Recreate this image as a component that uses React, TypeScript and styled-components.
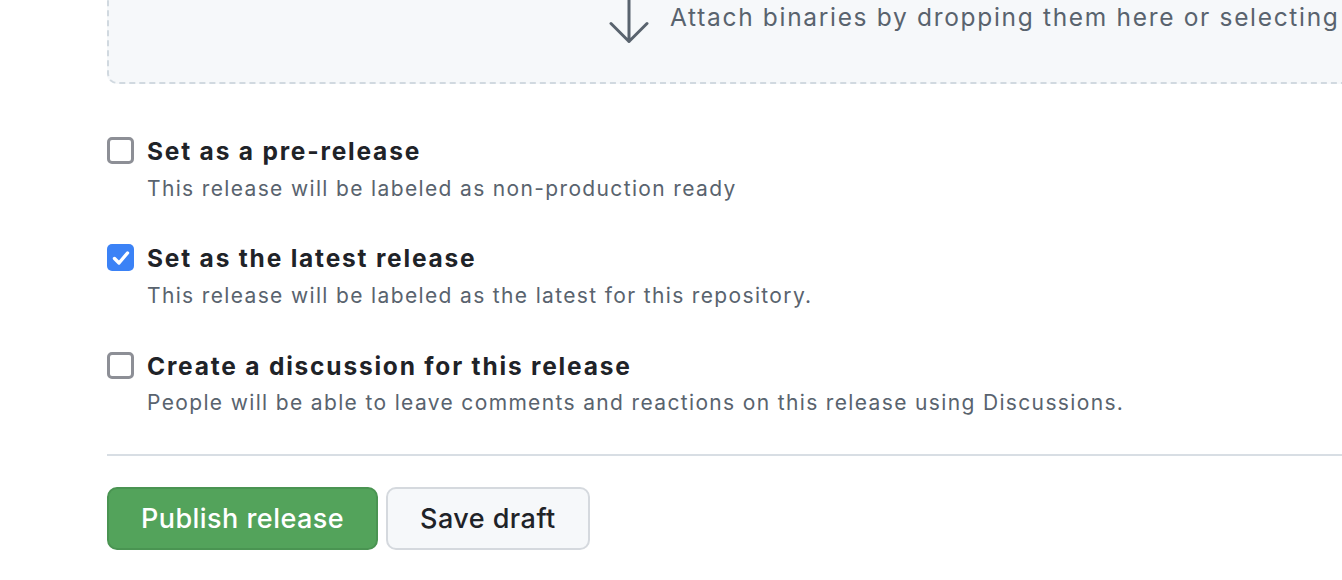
import React from "react";
import styled, { createGlobalStyle } from "styled-components";

const Global = createGlobalStyle`
  html, body { margin: 0; padding: 0; background: #ffffff; overflow: hidden; }
  body { font-family: Inter, "Noto Sans", "Liberation Sans", sans-serif; color: #1f2328; }
  * { box-sizing: border-box; }
`;

const Page = styled.div`
  padding-left: 107px;
  width: 1342px;
  height: 580px;
  overflow: hidden;
`;

const Column = styled.div`
  width: 1400px;
  display: flex;
  flex-direction: column;
`;

const Dropzone = styled.div`
  margin-top: -50px;
  height: 134px;
  border: 2px dashed #d1d9e0;
  border-radius: 10px;
  background: #f6f8fa;
  display: flex;
  align-items: center;
  gap: 21px;
  padding-left: 500px;
`;

const DropText = styled.span`
  font-size: 24.5px;
  line-height: 1.5;
  letter-spacing: 1.68px;
  color: #59636e;
  white-space: nowrap;
`;

const Options = styled.div`
  margin-top: 49px;
  display: flex;
  flex-direction: column;
  gap: 36px;
`;

const Row = styled.label`
  display: flex;
  align-items: flex-start;
  gap: 13px;
`;

const Box = styled.span<{ $checked?: boolean }>`
  flex: none;
  margin-top: 4px;
  width: 27px;
  height: 27px;
  border-radius: 5px;
  display: flex;
  align-items: center;
  justify-content: center;
  background: ${(p) => (p.$checked ? "#3b82f6" : "#ffffff")};
  border: ${(p) => (p.$checked ? "none" : "3px solid #8d8f96")};
`;

const Texts = styled.div`
  display: flex;
  flex-direction: column;
  gap: 3px;
`;

const Title = styled.span`
  font-size: 24.5px;
  line-height: 1.5;
  font-weight: 700;
  letter-spacing: 1.8px;
  color: #1f2328;
`;

const Desc = styled.span`
  font-size: 21px;
  line-height: 1.5;
  letter-spacing: 1.35px;
  color: #59636e;
`;

const Divider = styled.hr`
  margin: 35px 0 0;
  border: none;
  border-top: 2px solid #d8dee4;
  height: 0;
`;

const Actions = styled.div`
  margin-top: 31px;
  display: flex;
  gap: 8px;
`;

const Button = styled.button<{ $primary?: boolean }>`
  height: 63px;
  padding: 0 32px;
  border-radius: 10px;
  font-family: inherit;
  font-size: 27px;
  font-weight: 500;
  letter-spacing: 0.45px;
  background: ${(p) => (p.$primary ? "#53a35b" : "#f6f8fa")};
  color: ${(p) => (p.$primary ? "#ffffff" : "#1f2328")};
  border: 2px solid ${(p) => (p.$primary ? "#4a9452" : "#d5d9de")};
  cursor: pointer;
`;

const ArrowDown = () => (
  <svg width="40" height="56" viewBox="0 0 40 56" fill="none">
    <path
      d="M20 0 V52.5 M2 34.5 L20 52.5 L38 34.5"
      stroke="#59636e"
      strokeWidth="3"
      strokeLinecap="round"
      strokeLinejoin="round"
    />
  </svg>
);

const Check = () => (
  <svg width="22" height="22" viewBox="0 0 22 22" fill="none">
    <path
      d="M4.5 11.5 L9 16 L17.5 6"
      stroke="#ffffff"
      strokeWidth="3.4"
      strokeLinecap="round"
      strokeLinejoin="round"
    />
  </svg>
);

const options = [
  {
    title: "Set as a pre-release",
    desc: "This release will be labeled as non-production ready",
    checked: false,
  },
  {
    title: "Set as the latest release",
    desc: "This release will be labeled as the latest for this repository.",
    checked: true,
  },
  {
    title: "Create a discussion for this release",
    desc: "People will be able to leave comments and reactions on this release using Discussions.",
    checked: false,
  },
];

export default function App() {
  return (
    <>
      <Global />
      <Page>
        <Column>
          <Dropzone>
            <ArrowDown />
            <DropText>Attach binaries by dropping them here or selecting them.</DropText>
          </Dropzone>
          <Options>
            {options.map((o) => (
              <Row key={o.title}>
                <Box $checked={o.checked}>{o.checked && <Check />}</Box>
                <Texts>
                  <Title>{o.title}</Title>
                  <Desc>{o.desc}</Desc>
                </Texts>
              </Row>
            ))}
          </Options>
          <Divider />
          <Actions>
            <Button $primary>Publish release</Button>
            <Button>Save draft</Button>
          </Actions>
        </Column>
      </Page>
    </>
  );
}
